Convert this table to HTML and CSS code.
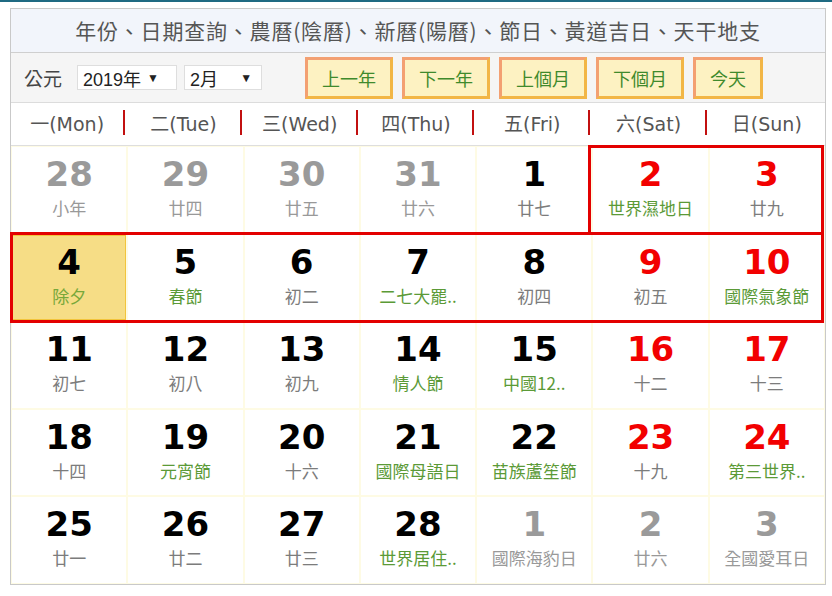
FILE: index.html
```html
<!DOCTYPE html>
<html lang="zh-Hant">
<head>
<meta charset="utf-8">
<title>萬年曆</title>
<link rel="stylesheet" href="styles.css">
</head>
<body>
<div class="topline"></div>
<div class="cal">
  <div class="title">年份、日期查詢、農曆(陰曆)、新曆(陽曆)、節日、黃道吉日、天干地支</div>
  <div class="toolbar">
    <span class="era">公元</span>
    <span class="sel sel-year">2019年<span class="arrow">▼</span></span>
    <span class="sel sel-month">2月<span class="arrow">▼</span></span>
    <div class="btns">
      <span class="btn">上一年</span>
      <span class="btn">下一年</span>
      <span class="btn">上個月</span>
      <span class="btn">下個月</span>
      <span class="btn">今天</span>
    </div>
  </div>
  <div class="weekdays">
    <div class="wd"><span>一(Mon)</span><i class="sep"></i></div>
    <div class="wd"><span>二(Tue)</span><i class="sep"></i></div>
    <div class="wd"><span>三(Wed)</span><i class="sep"></i></div>
    <div class="wd"><span>四(Thu)</span><i class="sep"></i></div>
    <div class="wd"><span>五(Fri)</span><i class="sep"></i></div>
    <div class="wd"><span>六(Sat)</span><i class="sep"></i></div>
    <div class="wd"><span>日(Sun)</span></div>
  </div>
  <div class="grid">
    <div class="cell other"><b>28</b><em>小年</em></div>
    <div class="cell other"><b>29</b><em>廿四</em></div>
    <div class="cell other"><b>30</b><em>廿五</em></div>
    <div class="cell other"><b>31</b><em>廿六</em></div>
    <div class="cell"><b>1</b><em>廿七</em></div>
    <div class="cell red"><b>2</b><em class="fest">世界濕地日</em></div>
    <div class="cell red"><b>3</b><em>廿九</em></div>

    <div class="cell today"><b>4</b><em class="fest">除夕</em></div>
    <div class="cell"><b>5</b><em class="fest">春節</em></div>
    <div class="cell"><b>6</b><em>初二</em></div>
    <div class="cell"><b>7</b><em class="fest">二七大罷..</em></div>
    <div class="cell"><b>8</b><em>初四</em></div>
    <div class="cell red"><b>9</b><em>初五</em></div>
    <div class="cell red"><b>10</b><em class="fest">國際氣象節</em></div>

    <div class="cell"><b>11</b><em>初七</em></div>
    <div class="cell"><b>12</b><em>初八</em></div>
    <div class="cell"><b>13</b><em>初九</em></div>
    <div class="cell"><b>14</b><em class="fest">情人節</em></div>
    <div class="cell"><b>15</b><em class="fest">中國12..</em></div>
    <div class="cell red"><b>16</b><em>十二</em></div>
    <div class="cell red"><b>17</b><em>十三</em></div>

    <div class="cell"><b>18</b><em>十四</em></div>
    <div class="cell"><b>19</b><em class="fest">元宵節</em></div>
    <div class="cell"><b>20</b><em>十六</em></div>
    <div class="cell"><b>21</b><em class="fest">國際母語日</em></div>
    <div class="cell"><b>22</b><em class="fest">苗族蘆笙節</em></div>
    <div class="cell red"><b>23</b><em>十九</em></div>
    <div class="cell red"><b>24</b><em class="fest">第三世界..</em></div>

    <div class="cell"><b>25</b><em>廿一</em></div>
    <div class="cell"><b>26</b><em>廿二</em></div>
    <div class="cell"><b>27</b><em>廿三</em></div>
    <div class="cell"><b>28</b><em class="fest">世界居住..</em></div>
    <div class="cell other"><b>1</b><em>國際海豹日</em></div>
    <div class="cell other"><b>2</b><em>廿六</em></div>
    <div class="cell other"><b>3</b><em>全國愛耳日</em></div>

    <div class="mark mark-weekend"></div>
    <div class="mark mark-week"></div>
  </div>
</div>
</body>
</html>
```

FILE: styles.css
```css
* { box-sizing: border-box; }
html, body { margin: 0; padding: 0; background: #fff; }
body {
  font-family: "Noto Sans CJK TC", "Noto Sans", sans-serif;
  color: #333;
}
.topline {
  height: 2px;
  background: #1f6a82;
}
.cal {
  margin: 6px 0 0 10px;
  width: 816px;
  border: 1px solid #c9c9c9;
}
.title {
  height: 44px;
  background: #f2f5fb;
  border-bottom: 1px solid #cfcfcf;
  display: flex;
  align-items: center;
  justify-content: center;
  font-size: 21px;
  color: #555;
  letter-spacing: 0.8px;
  padding-bottom: 2px;
}
.toolbar {
  height: 50px;
  background: #f5f5f5;
  border-bottom: 1px solid #dcdcdc;
  display: flex;
  align-items: center;
  padding-left: 13px;
}
.era {
  font-size: 19px;
  color: #444;
  margin-right: 15px;
}
.sel {
  display: inline-flex;
  align-items: center;
  height: 25px;
  background: #fff;
  border: 1px solid #dedede;
  font-family: "Liberation Sans", "Noto Sans CJK TC", sans-serif;
  font-size: 18px;
  color: #222;
  padding-left: 5px;
}
.sel-year { width: 100px; margin-right: 7px; }
.sel-month { width: 78px; }
.arrow {
  font-size: 12px;
  margin-left: auto;
  margin-right: 9px;
}
.sel-year .arrow { margin-left: 6px; }
.btns {
  display: flex;
  gap: 9px;
  margin-left: 43px;
}
.btn {
  display: flex;
  align-items: center;
  justify-content: center;
  height: 42px;
  padding: 0 14px;
  background: #fdf2c2;
  border: 3px solid;
  border-color: #f3a072 #f2b646 #f2b646 #f3a072;
  color: #3f8a2c;
  font-size: 18px;
}
.weekdays {
  height: 43px;
  border-bottom: 1px solid #dedede;
  display: grid;
  grid-template-columns: repeat(7, 1fr);
}
.wd {
  display: flex;
  align-items: center;
  font-family: "DejaVu Sans", "Noto Sans CJK TC", sans-serif;
  font-size: 19px;
  color: #555;
  padding-bottom: 3px;
}
.wd span {
  flex: 1;
  text-align: center;
}
.wd .sep {
  width: 2px;
  height: 25px;
  background: #c21010;
  margin-right: 2px;
}
.grid {
  position: relative;
  height: 438px;
  display: grid;
  grid-template-columns: repeat(7, 1fr);
  grid-template-rows: repeat(5, 1fr);
  background: #fefbe4;
  gap: 2px;
  padding: 1px;
}
.cell {
  background: #fff;
  display: flex;
  flex-direction: column;
  align-items: center;
  padding-top: 7px;
}
.cell b {
  font-family: "DejaVu Sans", "Verdana", sans-serif;
  font-weight: bold;
  font-size: 34px;
  line-height: 40px;
  color: #000;
}
.cell em {
  font-style: normal;
  font-size: 17px;
  line-height: 28px;
  color: #7c7c7c;
}
.cell em.fest { color: #5b9a37; }
.cell.red b { color: #f20000; }
.cell.other b { color: #9a9a9a; }
.cell.other em { color: #999; }
.cell.today {
  background: #f6dd86;
  box-shadow: inset 0 0 0 1px #f2c43c;
}
.cell.today em { color: #78a83a; }

.mark {
  position: absolute;
  border: 3px solid #e30000;
  pointer-events: none;
}
.mark-week {
  left: -1px;
  right: 1px;
  top: 86px;
  height: 91px;
}
.mark-weekend {
  left: calc(500% / 7 - 4px);
  right: 1px;
  top: -1px;
  height: 90px;
}
```
